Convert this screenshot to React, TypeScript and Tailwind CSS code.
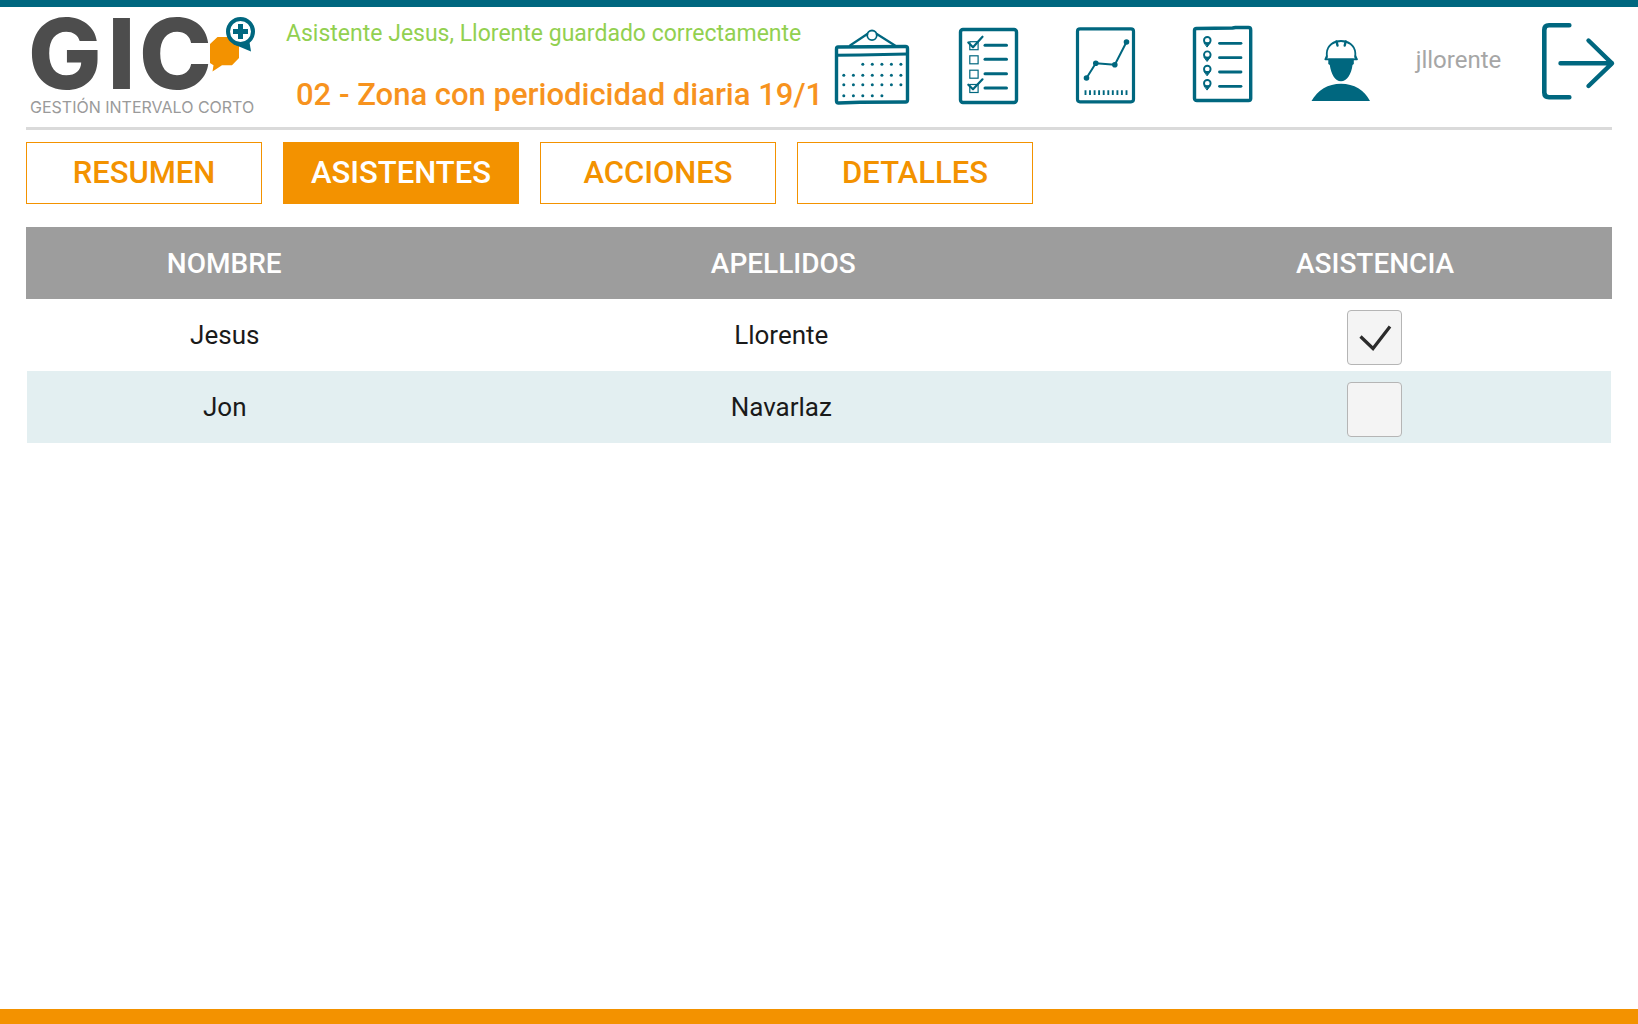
import { useState, type ReactNode } from "react";
import { clsx } from "clsx";

const TABS = ["RESUMEN", "ASISTENTES", "ACCIONES", "DETALLES"];

const ATTENDEES = [
  { id: 1, name: "Jesus", surname: "Llorente", present: true },
  { id: 2, name: "Jon", surname: "Navarlaz", present: false },
];

function Logo() {
  return (
    <svg className="w-[230px] h-[102px] overflow-visible" viewBox="28 12 230 102" role="img" aria-label="GIC Gestión Intervalo Corto">
      <g fontSize="98" fontWeight="800" fill="#4d4d4d" fontFamily="Inter, sans-serif">
        <text x="28" y="89">G</text>
        <text x="121.500" y="89" textAnchor="middle">I</text>
        <text x="139" y="89">C</text>
      </g>
      <text x="30" y="112.500" fontSize="16" fill="#9a9a9a" fontFamily="Inter, sans-serif">GESTIÓN INTERVALO CORTO</text>
      <path d="M217.500 37H232L239 44V58L232 65.300H222L212.500 71.500L213.500 65.300L210 63V44Z" fill="#f39200" />
      <path d="M233 44L251 51.500L249 39Z" fill="#00677f" />
      <circle cx="240.500" cy="31.500" r="12.500" fill="#fff" stroke="#00677f" strokeWidth="4" />
      <path d="M233 31.500H248M240.500 24V39" stroke="#00677f" strokeWidth="5" />
    </svg>
  );
}

function Icon({ children }: { children: ReactNode }) {
  return (
    <svg
      className="w-[84px] h-[90px]"
      viewBox="0 0 84 90"
      fill="none"
      stroke="#00677f"
      strokeWidth="3"
      strokeLinecap="round"
      strokeLinejoin="round"
      aria-hidden="true"
    >
      {children}
    </svg>
  );
}

const DOT_COLS = [13.8, 23.4, 32.8, 42.3, 51.9, 61.4, 70.9];
const DOT_ROWS = [
  { y: 47.3, from: 2, to: 7 },
  { y: 58.3, from: 0, to: 7 },
  { y: 67.7, from: 0, to: 7 },
  { y: 78.7, from: 0, to: 5 },
];

function CalendarIcon() {
  return (
    <Icon>
      <path d="M8 30L75.500 29.500Q77.500 29.500 77.500 31.500V83Q77.500 85 75.500 85L30 85.200L8.500 86Q6.500 86 6.500 84V32Q6.500 30 8 30Z" strokeWidth="3.400" />
      <path d="M6.500 38.200L30 38L77.500 37" />
      <circle cx="42" cy="18.300" r="4.800" strokeWidth="1.800" />
      <path d="M20 28.500L37.300 17M46.800 17L65 28.500" strokeWidth="2.200" />
      {DOT_ROWS.map((row) =>
        DOT_COLS.slice(row.from, row.to).map((x) => (
          <circle key={`${x}-${row.y}`} cx={x} cy={row.y} r="1.500" fill="#00677f" stroke="none" />
        ))
      )}
    </Icon>
  );
}

function ChecklistIcon() {
  return (
    <Icon>
      <rect x="13.500" y="12.500" width="56" height="73" rx="2.500" strokeWidth="3.400" />
      {[24.7, 38.8, 53.2, 67.5].map((y) => (
        <g key={y}>
          <rect x="22.800" y={y} width="8.300" height="8" strokeWidth="1.200" strokeLinejoin="miter" />
          <path d={`M38 ${y + 3.5}H59.500`} />
        </g>
      ))}
      <path d="M21.300 25.500L26 30.300L35.500 19.700M21.300 67.700L26 72.300L35.500 62.300" strokeWidth="2.200" />
    </Icon>
  );
}

function ChartIcon() {
  return (
    <Icon>
      <rect x="13.500" y="11.800" width="56" height="73" rx="2.500" strokeWidth="3.200" />
      <path d="M22.500 61L31.800 46.300L50.800 47.700L62.500 25" strokeWidth="2" />
      {[[22.5, 61], [31.8, 46.3], [50.8, 47.7], [62.5, 25]].map(([x, y]) => (
        <circle key={x} cx={x} cy={y} r="2.800" fill="#00677f" stroke="none" />
      ))}
      <path
        d="M21.500 73.300V78M26 73.300V78M30.600 73.300V78M35.100 73.300V78M39.700 73.300V78M44.300 73.300V78M48.800 73.300V78M53.400 73.300V78M57.900 73.300V78M62.500 73.300V78"
        strokeWidth="1.900"
        strokeLinecap="butt"
      />
    </Icon>
  );
}

function PlacesIcon() {
  return (
    <Icon>
      <path d="M15.500 11.500L51.500 11L54.500 10.500H67.500Q69.700 10.500 69.700 13V81.500Q69.700 83.500 67.500 83.500H16Q13.500 83.500 13.500 81.500V13.500Q13.500 11.500 15.500 11.500Z" strokeWidth="3.400" />
      {[23.3, 37.7, 52, 66.3].map((y) => (
        <g key={y}>
          <circle cx="26.300" cy={y} r="3.300" strokeWidth="1.900" />
          <path d={`M23.300 ${y + 2.5}H29.300L26.300 ${y + 6.5}Z`} fill="#00677f" strokeWidth="1" />
          <path d={`M38.500 ${y + 3}H60`} strokeWidth="2.800" />
        </g>
      ))}
    </Icon>
  );
}

function WorkerIcon() {
  return (
    <Icon>
      <path d="M13.500 84C19.500 73 30 66.700 43 66.700S66.500 73 72 84Z" fill="#00677f" stroke="none" />
      <path d="M30.300 41.500H55.800V47L54.500 48C53.500 57 49 64.300 43 64.300S33 57 31.800 48L30.300 47Z" fill="#00677f" stroke="none" />
      <path d="M28.800 41V36C29.300 28 36 24 43 24S56.800 28 57.300 36V41" strokeWidth="1.800" />
      <path d="M28.800 39L27.300 42.300H59L57.300 39" strokeWidth="1.800" />
      <path d="M38.500 24.500L39.500 28.500M47.700 24.500L46.700 28.500" strokeWidth="2.400" />
    </Icon>
  );
}

function LogoutIcon() {
  return (
    <Icon>
      <path d="M37.300 8.300H17Q12.300 8.300 12.300 13V75.500Q12.300 80.200 17 80.200H37.300" strokeWidth="4.600" />
      <path d="M28.500 46.300H80M56.500 23.500L80 46.300L56.500 69" strokeWidth="4.400" />
    </Icon>
  );
}

const NAV = [
  { label: "Calendario", icon: <CalendarIcon /> },
  { label: "Tareas", icon: <ChecklistIcon /> },
  { label: "Indicadores", icon: <ChartIcon /> },
  { label: "Zonas", icon: <PlacesIcon /> },
  { label: "Usuario", icon: <WorkerIcon /> },
];

export default function App() {
  const [tab, setTab] = useState("ASISTENTES");
  const [attendees, setAttendees] = useState(ATTENDEES);

  const toggle = (id: number) =>
    setAttendees((list) => list.map((a) => (a.id === id ? { ...a, present: !a.present } : a)));

  return (
    <div className="min-h-screen flex flex-col bg-white border-t-[7px] border-[#00677f] font-[Roboto,sans-serif]">
      <header>
        <div className="grid grid-cols-[271fr_542fr_repeat(7,117fr)] h-[120px] pr-1.5">
          <div className="pl-7 pt-[5px]">
            <Logo />
          </div>

          <div className="min-w-0 pl-[15px] pt-3 whitespace-nowrap">
            <p role="status" className="text-[23px] leading-[30px] text-[#92d050]">
              Asistente Jesus, Llorente guardado correctamente
            </p>
            <h1 className="pl-2.5 pt-6 text-[31px] leading-[44px] font-medium text-[#f7931e]">
              02 - Zona con periodicidad diaria 19/1
            </h1>
          </div>

          {NAV.map((item) => (
            <button key={item.label} type="button" aria-label={item.label} className="flex justify-center items-start pt-2.5">
              {item.icon}
            </button>
          ))}

          <div className="pt-9 pl-1 text-center text-2xl leading-[34px] text-[#a6a6a6]">jllorente</div>

          <button type="button" aria-label="Salir" className="flex justify-center items-start pt-2.5">
            <LogoutIcon />
          </button>
        </div>
        <hr className="mx-[26px] border-t-3 border-[#dadada]" />
      </header>

      <main className="flex-1 px-[26px] pt-3">
        <nav className="flex gap-[21px]">
          {TABS.map((t) => (
            <button
              key={t}
              type="button"
              onClick={() => setTab(t)}
              className={clsx(
                "w-[236px] h-[62px] border border-[#f39200] text-[31px] font-medium",
                t === tab ? "bg-[#f39200] text-white" : "bg-white text-[#f39200]"
              )}
            >
              {t}
            </button>
          ))}
        </nav>

        <table className="mt-[23px] w-full table-fixed border-separate border-spacing-0 text-center">
          <thead>
            <tr className="h-[72px] bg-[#9d9d9d] text-[28px] text-white">
              <th className="w-[25%] p-0 pt-0.5 font-medium">NOMBRE</th>
              <th className="w-[45.5%] p-0 pt-0.5 font-medium">APELLIDOS</th>
              <th className="p-0 pt-0.5 pr-1.5 font-medium">ASISTENCIA</th>
            </tr>
          </thead>
          <tbody>
            {attendees.map((a) => (
              <tr key={a.id} className="h-[72px] text-[26px] text-[#1a1a1a] even:*:bg-[#e3eff1]">
                <td className="p-0 border-l border-white">{a.name}</td>
                <td className="p-0 pr-1">{a.surname}</td>
                <td className="p-0 pt-1 pr-1.5 border-r border-white">
                  <label className="relative mx-auto block size-[55px]">
                    <input
                      type="checkbox"
                      aria-label={`Asistencia de ${a.name} ${a.surname}`}
                      checked={a.present}
                      onChange={() => toggle(a.id)}
                      className="block size-full appearance-none rounded border border-[#b5b5b5] bg-[#f4f4f4]"
                    />
                    {a.present && (
                      <svg className="pointer-events-none absolute inset-0" viewBox="0 0 55 55" fill="none" aria-hidden="true">
                        <path d="M13.500 26.500L26 38.500L43 16.500" stroke="#2b2b2b" strokeWidth="3.200" />
                      </svg>
                    )}
                  </label>
                </td>
              </tr>
            ))}
          </tbody>
        </table>
      </main>

      <footer className="h-[15px] bg-[#f39200]" />
    </div>
  );
}
